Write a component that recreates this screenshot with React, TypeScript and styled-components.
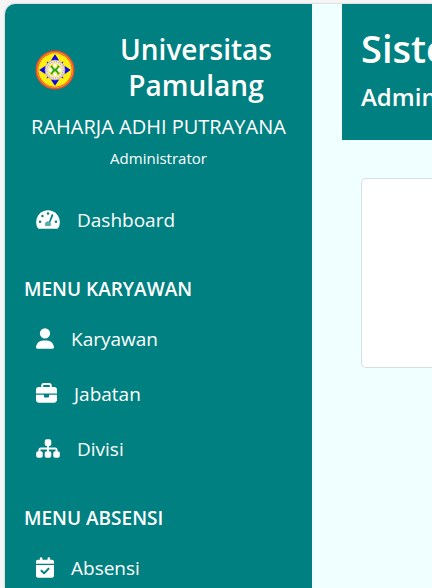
import React from "react";
import styled, { createGlobalStyle } from "styled-components";
import { FaBriefcase, FaCalendarCheck, FaSitemap, FaUser } from "react-icons/fa6";

const GlobalStyle = createGlobalStyle`
  * { box-sizing: border-box; }
  body {
    margin: 0;
    background: #f5f5f5;
    font-family: "Segoe UI", "Open Sans", "Noto Sans", sans-serif;
    overflow: hidden;
  }
  h1, h2, p, ul { margin: 0; padding: 0; }
`;

const Frame = styled.div`
  display: flex;
  min-height: calc(100vh - 4px);
  margin: 4px 0 0 5px;
  border-top-left-radius: 10px;
  overflow: hidden;
  background: #f0ffff;
  box-shadow: 0 0 2px rgba(0, 0, 0, 0.3);
`;

const Sidebar = styled.aside`
  flex: 0 0 307px;
  height: calc(100vh - 4px);
  overflow: hidden;
  padding: 27px 19px 0;
  background: #008080;
  color: #fff;
`;

const Brand = styled.div`
  display: flex;
  align-items: flex-end;
  padding: 0 12px 0 11px;
`;

const Logo = styled.svg`
  flex: none;
  width: 40px;
  height: 40px;
  margin-bottom: 13px;
`;

const BrandName = styled.h2`
  flex: 1;
  padding-left: 36px;
  font-size: 28px;
  font-weight: 600;
  line-height: 36px;
  text-align: center;
`;

const UserName = styled.p`
  margin-top: 10px;
  font-size: 20px;
  line-height: 28px;
  text-align: center;
  white-space: nowrap;
`;

const UserRole = styled.p`
  margin-top: 6px;
  font-size: 15px;
  line-height: 22px;
  text-align: center;
`;

const Navigation = styled.nav`
  margin-top: 23px;
`;

const MenuTitle = styled.h2`
  margin: 21px 0 1px;
  font-size: 19px;
  font-weight: 600;
  line-height: 42px;
`;

const MenuList = styled.ul`
  list-style: none;
`;

const MenuLink = styled.a<{ $iconWidth: number }>`
  display: flex;
  align-items: center;
  gap: 17px;
  height: 55px;
  padding: 0 12px;
  color: #fff;
  font-size: 19px;
  line-height: 28px;
  text-decoration: none;

  svg {
    flex: none;
    width: ${({ $iconWidth }) => $iconWidth}px;
    height: 21px;
  }
`;

const Content = styled.main`
  flex: 1;
  min-width: 0;
  padding-left: 30px;
`;

const Header = styled.header`
  height: 136px;
  padding: 17px 0 0 19px;
  overflow: hidden;
  background: #008080;
  color: #fff;
  white-space: nowrap;
`;

const PageTitle = styled.h1`
  font-size: 38px;
  font-weight: 600;
  line-height: 54px;
`;

const PageSubtitle = styled.h2`
  margin-top: 4px;
  font-size: 24px;
  font-weight: 600;
  line-height: 36px;
`;

const Card = styled.section`
  height: 190px;
  margin: 38px 0 0 19px;
  border: 1px solid #d8dfdf;
  border-right: 0;
  border-radius: 5px 0 0 5px;
  background: #fff;
`;

function GaugeIcon() {
  return (
    <svg viewBox="0 0 576 512" aria-hidden="true">
      <path
        d="M288 32C129 32 0 161 0 320c0 53 14 102 39 145 6 10 16 15 27 15h444c11 0 21-5 27-15 25-43 39-92 39-145C576 161 447 32 288 32z"
        fill="currentColor"
      />
      <g fill="#008080">
        <circle cx="288" cy="112" r="30" />
        <circle cx="153" cy="170" r="30" />
        <circle cx="94" cy="310" r="30" />
        <circle cx="482" cy="310" r="30" />
        <path d="M374 139c14-22 52-4 40 23l-72 168c24 24 19 54 4 86H230c-34-60 5-116 58-112 10 1 17 3 23 6z" />
      </g>
      <path d="M230 416c-34-60 5-116 58-112s92 52 58 112z" fill="currentColor" opacity="0.35" />
    </svg>
  );
}

const sections = [
  { title: "", items: [{ label: "Dashboard", Icon: GaugeIcon, width: 24 }] },
  {
    title: "MENU KARYAWAN",
    items: [
      { label: "Karyawan", Icon: FaUser, width: 18 },
      { label: "Jabatan", Icon: FaBriefcase, width: 21 },
      { label: "Divisi", Icon: FaSitemap, width: 24 },
    ],
  },
  { title: "MENU ABSENSI", items: [{ label: "Absensi", Icon: FaCalendarCheck, width: 18 }] },
];

function UniversityLogo() {
  return (
    <Logo viewBox="0 0 38 38" role="img" aria-label="Universitas Pamulang">
      <circle cx="19" cy="19" r="18.5" fill="#f04c2c" />
      <circle cx="19" cy="19" r="17.1" fill="#f6a623" />
      <circle cx="19" cy="19" r="16.5" fill="#ea5a25" />
      <circle cx="19" cy="19" r="15.8" fill="#fff010" />
      <path d="M19 4l4 6h-8zM19 34l4-6h-8zM4 19l6-4v8zM34 19l-6-4v8z" fill="#0d08e8" />
      <path d="M11 11l3 1-2 2zM27 11l-3 1 2 2zM11 27l3-1-2-2zM27 27l-3-1 2-2z" fill="#2520b8" />
      <circle cx="19" cy="19" r="9.4" fill="#f5eedf" stroke="#b9a0a0" strokeWidth="0.8" />
      <circle cx="19" cy="19" r="7.8" fill="none" stroke="#b9a0a0" strokeWidth="1" strokeDasharray="1.2 1" />
      <circle cx="19" cy="19" r="6.3" fill="#f5e62b" />
      <circle cx="19" cy="14.8" r="1.8" fill="#fff" />
      <circle cx="19" cy="23.2" r="1.8" fill="#fff" />
      <circle cx="14.8" cy="19" r="1.8" fill="#fff" />
      <circle cx="23.2" cy="19" r="1.8" fill="#fff" />
      <path d="M15.5 15q1 3 3.5 4q2.5-1 3.5-4M15.5 23q1-3 3.5-4q2.5 1 3.5 4" fill="none" stroke="#22a12b" strokeWidth="1.6" />
    </Logo>
  );
}

export default function App() {
  return (
    <>
      <GlobalStyle />
      <Frame>
        <Sidebar>
          <Brand>
            <UniversityLogo />
            <BrandName>Universitas Pamulang</BrandName>
          </Brand>
          <UserName>RAHARJA ADHI PUTRAYANA</UserName>
          <UserRole>Administrator</UserRole>
          <Navigation>
            {sections.map(({ title, items }) => (
              <React.Fragment key={title}>
                {title && <MenuTitle>{title}</MenuTitle>}
                <MenuList>
                  {items.map(({ label, Icon, width }) => (
                    <li key={label}>
                      <MenuLink href="#" $iconWidth={width}>
                        <Icon aria-hidden="true" />
                        {label}
                      </MenuLink>
                    </li>
                  ))}
                </MenuList>
              </React.Fragment>
            ))}
          </Navigation>
        </Sidebar>
        <Content>
          <Header>
            <PageTitle>Sistem</PageTitle>
            <PageSubtitle>Administrator</PageSubtitle>
          </Header>
          <Card />
        </Content>
      </Frame>
    </>
  );
}
